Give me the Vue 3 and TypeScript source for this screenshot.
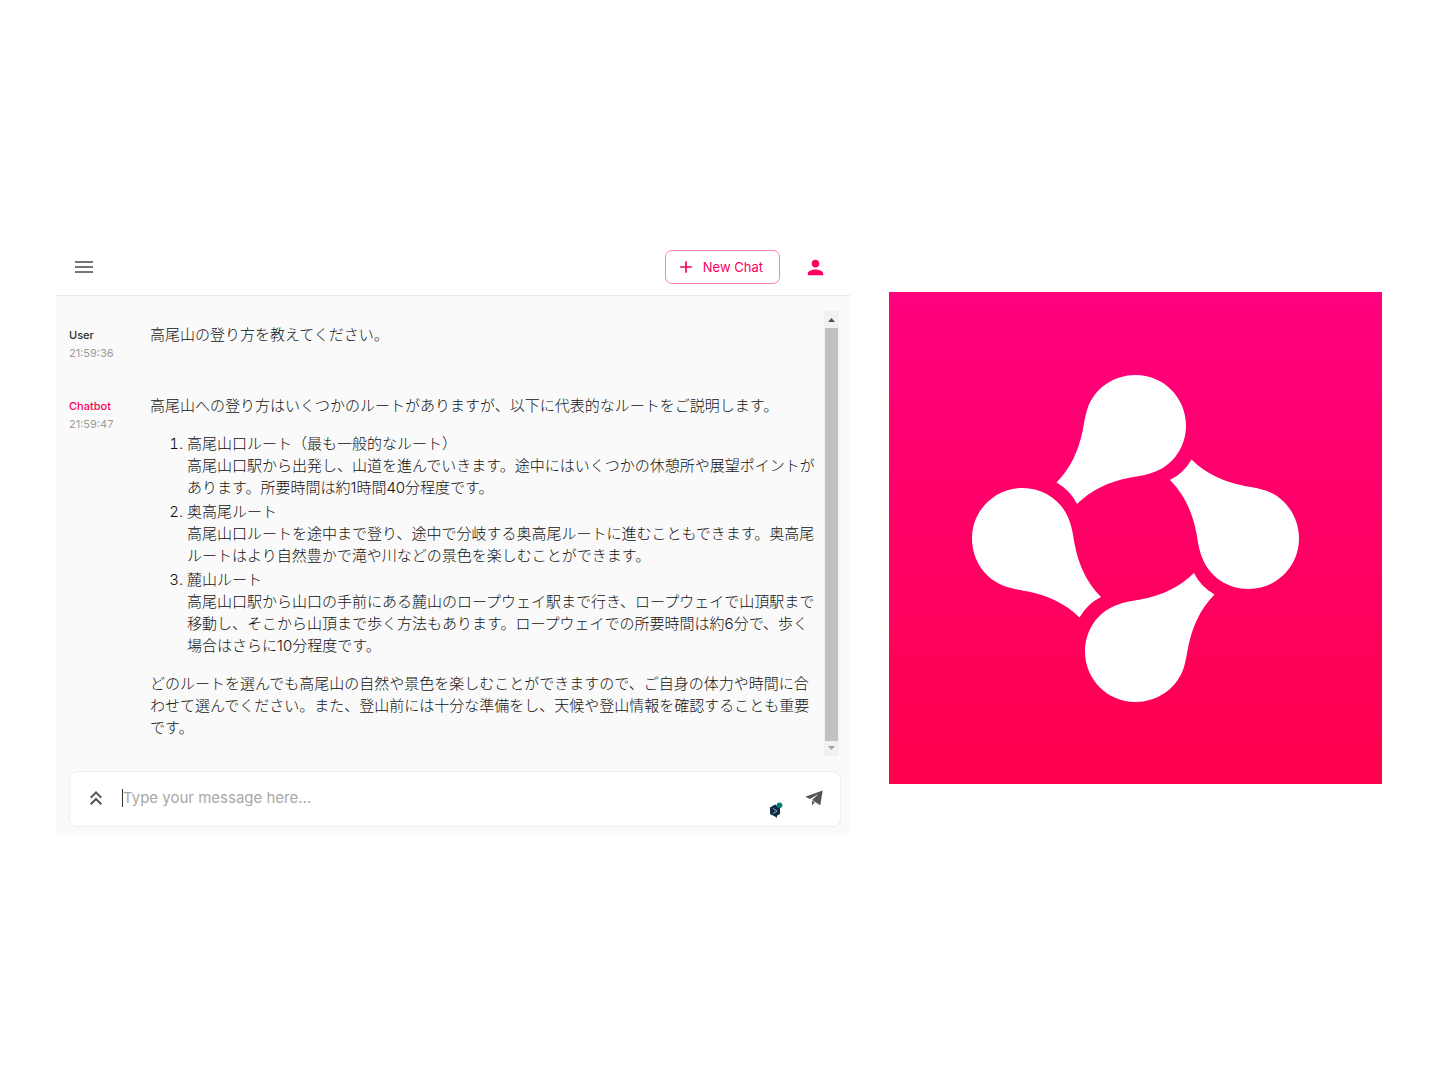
<script setup lang="ts">
import { ref } from 'vue'

interface Route {
  name: string
  detail: string
}

const routes: Route[] = [
  {
    name: '高尾山口ルート（最も一般的なルート）',
    detail:
      '高尾山口駅から出発し、山道を進んでいきます。途中にはいくつかの休憩所や展望ポイントがあります。所要時間は約1時間40分程度です。',
  },
  {
    name: '奥高尾ルート',
    detail:
      '高尾山口ルートを途中まで登り、途中で分岐する奥高尾ルートに進むこともできます。奥高尾ルートはより自然豊かで滝や川などの景色を楽しむことができます。',
  },
  {
    name: '麓山ルート',
    detail:
      '高尾山口駅から山口の手前にある麓山のロープウェイ駅まで行き、ロープウェイで山頂駅まで移動し、そこから山頂まで歩く方法もあります。ロープウェイでの所要時間は約6分で、歩く場合はさらに10分程度です。',
  },
]

const draft = ref('')
const petalAngles: number[] = [0, 90, 180, 270]
</script>

<template>
  <main class="page">
    <section class="chat">
      <header class="topbar">
        <button class="icon-btn menu" type="button" aria-label="Menu">
          <svg viewBox="0 0 24 24" width="24" height="24"><path d="M3 18h18v-2H3v2zm0-5h18v-2H3v2zm0-7v2h18V6H3z" /></svg>
        </button>
        <button class="new-chat" type="button">
          <svg viewBox="0 0 24 24" width="20" height="20"><path d="M19 13h-6v6h-2v-6H5v-2h6V5h2v6h6v2z" /></svg>
          <span>New Chat</span>
        </button>
        <button class="icon-btn account" type="button" aria-label="Account">
          <svg viewBox="0 0 24 24" width="23" height="23"><path d="M12 12c2.210 0 4-1.790 4-4s-1.790-4-4-4-4 1.790-4 4 1.790 4 4 4zm0 2c-2.670 0-8 1.340-8 4v2h16v-2c0-2.660-5.330-4-8-4z" /></svg>
        </button>
      </header>

      <div class="body">
        <div class="history">
          <div class="messages">
            <article class="message">
              <div class="meta">
                <strong>User</strong>
                <time>21:59:36</time>
              </div>
              <div class="text" lang="ja"><p>高尾山の登り方を教えてください。</p></div>
            </article>
            <article class="message">
              <div class="meta bot">
                <strong>Chatbot</strong>
                <time>21:59:47</time>
              </div>
              <div class="text" lang="ja">
                <p>高尾山への登り方はいくつかのルートがありますが、以下に代表的なルートをご説明します。</p>
                <ol>
                  <li v-for="route in routes" :key="route.name">{{ route.name }}<br />{{ route.detail }}</li>
                </ol>
                <p>どのルートを選んでも高尾山の自然や景色を楽しむことができますので、ご自身の体力や時間に合わせて選んでください。また、登山前には十分な準備をし、天候や登山情報を確認することも重要です。</p>
              </div>
            </article>
          </div>
          <div class="scrollbar" aria-hidden="true">
            <svg class="arrow up" viewBox="0 0 15 17" width="15" height="17"><path d="M4 11l3.500-4 3.500 4z" /></svg>
            <div class="thumb"></div>
            <svg class="arrow down" viewBox="0 0 15 15" width="15" height="15"><path d="M4 5h7l-3.500 4z" /></svg>
          </div>
        </div>

        <form class="composer" @submit.prevent>
          <button class="icon-btn expand" type="button" aria-label="Expand">
            <svg viewBox="0 0 24 24" width="24" height="24"><path d="M6 17.590L7.410 19 12 14.420 16.590 19 18 17.590l-6-6zM6 11l1.410 1.410L12 7.830l4.590 4.580L18 11l-6-6z" /></svg>
          </button>
          <span class="caret" aria-hidden="true"></span>
          <input v-model="draft" type="text" placeholder="Type your message here..." aria-label="Message" />
          <svg class="translate" viewBox="0 0 14 16" width="14" height="16" aria-hidden="true">
            <path fill="#0f2b46" d="M6 2.500L1 5.500v6.500l5 2.500 2 1.500v-2.300l3-1.700V6z" />
            <path fill="none" stroke="#a9bccb" stroke-width=".8" d="M4 6.500l4 2.500-4 2.500" />
            <circle cx="10.500" cy="3.300" r="2.800" fill="#067a73" />
          </svg>
          <button class="icon-btn send" type="submit" aria-label="Send">
            <svg viewBox="0 0 18 16" width="18" height="16"><path d="M17.700.500L.300 6.800 5 8.900 13.500 4 7 9.900 15.300 15.200zM7 10.700v4.600l2.800-2.900z" /></svg>
          </button>
        </form>
      </div>
    </section>

    <svg class="logo" viewBox="0 0 493 492" role="img" aria-label="Logo">
      <defs>
        <linearGradient id="logo-bg" x1="0" y1="0" x2="0" y2="1">
          <stop offset="0" stop-color="#ff007f" />
          <stop offset="1" stop-color="#ff004c" />
        </linearGradient>
      </defs>
      <rect width="493" height="492" fill="url(#logo-bg)" />
      <g fill="#fff" transform="translate(246.500 246.500)">
        <path
          v-for="angle in petalAngles"
          :key="angle"
          :transform="`rotate(${angle})`"
          d="M-79-56C-65-70-57-88-53-107C-51-117-50.500-122-48-130C-41-150-22-163.500 0-163.500C28-163.500 50.500-141 50.500-113C50.500-92 38-74 20-67C10-63 3-62.500-5-61C-27-57-45-48-58.500-34.500Q-65-48-79-56Z"
        />
      </g>
    </svg>
  </main>
</template>

<style>
body {
  margin: 0;
  background: #fff;
}
</style>

<style scoped>
.page {
  box-sizing: border-box;
  min-height: 100vh;
  padding: 0 55px 2px 56px;
  display: grid;
  grid-template-columns: 794fr 493fr;
  gap: 39px;
  align-items: center;
  font-family: Inter, 'Noto Sans CJK JP', sans-serif;
  color: #2b2b2b;
}

button {
  margin: 0;
  padding: 0;
  border: 0;
  background: none;
  font: inherit;
  cursor: pointer;
}

svg {
  display: block;
  fill: currentColor;
}

.logo {
  width: 100%;
  height: auto;
}

.topbar {
  box-sizing: border-box;
  height: 55px;
  padding: 0 23px 2px 16px;
  display: flex;
  align-items: center;
  border-bottom: 1px solid #e9e9e9;
}

.icon-btn {
  flex: none;
  color: #555;
}

.menu {
  margin-right: auto;
  color: #757575;
}

.new-chat {
  box-sizing: border-box;
  height: 34px;
  padding: 0 14px 0 10px;
  display: flex;
  align-items: center;
  gap: 7px;
  border: 1px solid #ff80ae;
  border-radius: 7px;
  color: #f8005c;
  font-size: 13px;
  line-height: 20px;
}

.new-chat span {
  padding-right: 2px;
}

.account {
  margin-left: 24px;
  color: #ff0062;
}

.body {
  padding: 15px 9px 8px 13px;
  background: #fafafa;
}

.history {
  display: flex;
}

.messages {
  flex: 1;
  padding: 13px 3px 17px 0;
  display: flex;
  flex-direction: column;
  gap: 49px;
}

.message {
  display: flex;
}

.meta {
  flex: none;
  width: 81px;
  display: flex;
  flex-direction: column;
  font-size: 11px;
  line-height: 18px;
  padding-top: 2px;
  box-sizing: border-box;
  height: 22px;
}

.meta strong {
  font-weight: 500;
}

.meta time {
  color: #9a9a9a;
}

.bot strong {
  color: #f8005c;
}

.text {
  flex: 1;
  color: #111;
  font-size: 15px;
  line-height: 22px;
  font-weight: 300;
}

.text p {
  margin: 0;
}

.text ol {
  margin: 16px 0;
  padding-left: 37px;
}

.text li + li {
  margin-top: 2px;
}

.scrollbar {
  flex: none;
  width: 15px;
  margin-right: 2px;
  display: flex;
  flex-direction: column;
  background: #f1f1f1;
}

.arrow {
  flex: none;
}

.up {
  color: #505050;
}

.down {
  color: #a3a3a3;
}

.thumb {
  flex: 1;
  margin: 0 1px;
  background: #c1c1c1;
}

.composer {
  box-sizing: border-box;
  height: 56px;
  margin-top: 15px;
  padding: 0 17px 2px 14px;
  display: flex;
  align-items: center;
  border: 1px solid #eee;
  border-radius: 8px;
  background: #fff;
}

.caret {
  width: 1px;
  height: 18px;
  margin-left: 14px;
  background: #333;
}

.composer input {
  flex: 1;
  min-width: 0;
  padding: 0;
  border: 0;
  outline: 0;
  background: none;
  font: inherit;
  font-size: 15px;
  line-height: 22px;
}

.composer input::placeholder {
  color: #a8a8a8;
  opacity: 1;
}

.translate {
  align-self: flex-end;
  margin: 0 22px 6px 0;
}
</style>
